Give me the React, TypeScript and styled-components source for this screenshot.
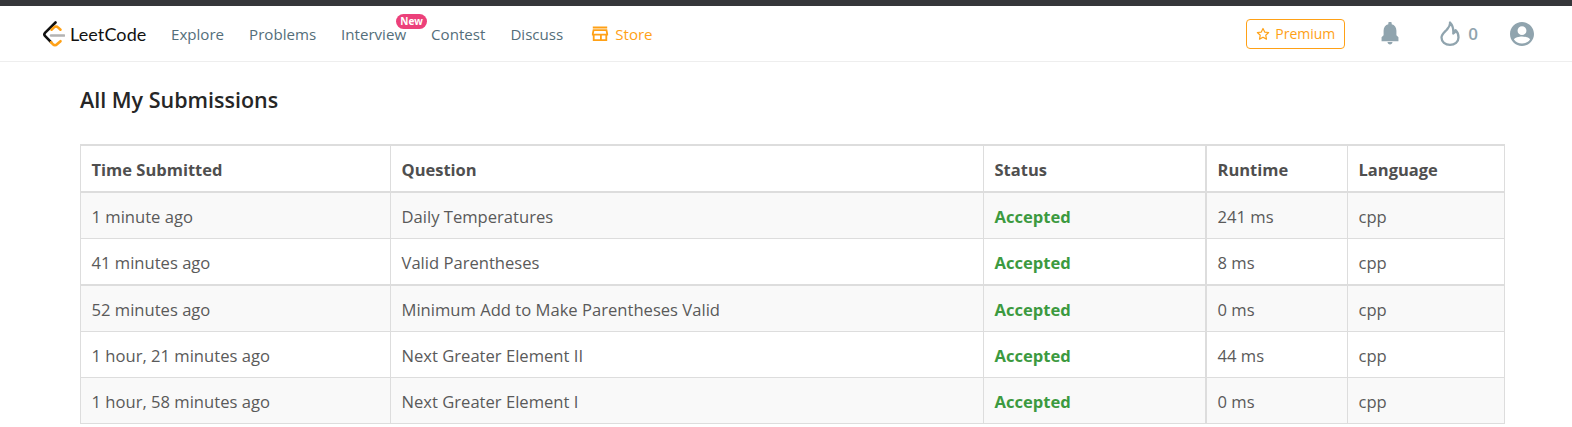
import React from "react";
import styled, { createGlobalStyle } from "styled-components";

const Global = createGlobalStyle`
  html, body { margin: 0; padding: 0; height: 100%; overflow: hidden; background: #fff; }
  body { font-family: "Open Sans", "Noto Sans", "Liberation Sans", sans-serif; }
  * { box-sizing: border-box; }
`;

const TopStrip = styled.div`
  height: 6px;
  background: #35363a;
`;

const NavBar = styled.header`
  height: 56px;
  display: flex;
  align-items: center;
  justify-content: space-between;
  padding: 0 38px 0 43px;
  border-bottom: 1px solid #eeeeee;
`;

const NavLeft = styled.nav`
  display: flex;
  align-items: center;
`;

const Brand = styled.div`
  display: flex;
  align-items: center;
  gap: 5px;
  width: 128px;
`;

const BrandName = styled.span`
  font-family: "Lato", "Liberation Sans", sans-serif;
  font-size: 18px;
  font-weight: 400;
  color: #111;
  letter-spacing: 0.1px;
`;

const NavLink = styled.a<{ $accent?: boolean }>`
  position: relative;
  display: flex;
  align-items: center;
  gap: 6px;
  margin-left: ${(p) => (p.$accent ? 3 : 0)}px;
  margin-right: 25px;
  font-size: 15.1px;
  line-height: 20px;
  color: ${(p) => (p.$accent ? "#ffa116" : "#546e7a")};
`;

const NewBadge = styled.span`
  position: absolute;
  top: -10px;
  right: -21px;
  width: 31px;
  height: 15px;
  border-radius: 8px;
  background: #ec407a;
  color: #fff;
  font-size: 10px;
  font-weight: 700;
  line-height: 15px;
  text-align: center;
`;

const NavRight = styled.div`
  display: flex;
  align-items: center;
`;

const PremiumButton = styled.button`
  width: 99px;
  height: 30px;
  display: flex;
  align-items: center;
  justify-content: center;
  gap: 5px;
  padding: 0;
  margin-right: 36px;
  background: #fff;
  border: 1px solid #ffa116;
  border-radius: 4px;
  color: #ffa116;
  font-family: inherit;
  font-size: 14px;
`;

const StreakGroup = styled.div`
  display: flex;
  align-items: center;
  gap: 8px;
  margin: 0 32px 0 41px;
  color: #90a4ae;
  font-size: 17px;
  font-weight: 600;
`;

const Content = styled.main`
  padding: 0 0 0 80px;
`;

const Title = styled.h1`
  margin: 0;
  padding-top: 24px;
  height: 82px;
  font-size: 21.5px;
  font-weight: 600;
  line-height: 28px;
  color: #262626;
`;

const Table = styled.table`
  width: 1425px;
  table-layout: fixed;
  border-spacing: 0;
  border-top: 2px solid #dddddd;
  border-left: 1px solid #dddddd;
`;

const Row = styled.tr<{ $striped?: boolean }>`
  background: ${(p) => (p.$striped ? "#f9f9f9" : "#fff")};
`;

const HeadCell = styled.th<{ $thick?: boolean }>`
  height: 47px;
  padding: 1px 10.5px 0;
  text-align: left;
  font-size: 16.5px;
  font-weight: 700;
  color: #4f4f4f;
  border-bottom: 2px solid #dddddd;
  border-right: ${(p) => (p.$thick ? 2 : 1)}px solid #dddddd;
`;

const Cell = styled.td<{ $thick?: boolean; $heavy?: boolean }>`
  height: ${(p) => (p.$heavy ? 47 : 46)}px;
  padding: 1px 10.5px 0;
  font-size: 16.6px;
  color: #5a5a5a;
  border-bottom: ${(p) => (p.$heavy ? 2 : 1)}px solid #dddddd;
  border-right: ${(p) => (p.$thick ? 2 : 1)}px solid #dddddd;
`;

const Accepted = styled.strong`
  color: #3c9a40;
  font-weight: 700;
`;

const rows = [
  ["1 minute ago", "Daily Temperatures", "241 ms"],
  ["41 minutes ago", "Valid Parentheses", "8 ms"],
  ["52 minutes ago", "Minimum Add to Make Parentheses Valid", "0 ms"],
  ["1 hour, 21 minutes ago", "Next Greater Element II", "44 ms"],
  ["1 hour, 58 minutes ago", "Next Greater Element I", "0 ms"],
];

const widths = [310, 593, 223, 141, 157];

const Logo = () => (
  <svg width="22" height="26" viewBox="0 0 22 26" fill="none">
    <path d="M8 14.5 H21" stroke="#b3b3b3" strokeWidth="2.6" strokeLinecap="round" />
    <path d="M12.5 1.5 L2.2 11.6 a2.6 2.6 0 0 0 0 3.6 L8 21.2" stroke="#111" strokeWidth="2.6" strokeLinecap="round" strokeLinejoin="round" />
    <path d="M8 21.2 L10 23.3 a2.800 2.800 0 0 0 4 0 L17.500 20.200" stroke="#ffa116" strokeWidth="2.6" strokeLinecap="round" />
    <path d="M8.500 8.700 L11 6.400 a2.800 2.800 0 0 1 4 0 L17.500 8.700" stroke="#ffa116" strokeWidth="2.6" strokeLinecap="round" />
  </svg>
);

const StoreIcon = () => (
  <svg width="18" height="18" viewBox="2 2.5 20 19.5" fill="#ffa116">
    <path d="M20 4H4v2h16V4zm1 10v-2l-1-5H4l-1 5v2h1v6h16v-6h1zm-9 4H6v-4h6v4zm6 0h-4v-4h4v4zM5.040 12l.6-3h12.720l.6 3H5.040z" />
  </svg>
);

const StarIcon = () => (
  <svg width="14" height="14" viewBox="0 0 24 24" fill="none" stroke="#ffa116" strokeWidth="2" strokeLinejoin="round">
    <path d="M12 2.500l2.900 6.200 6.800.8-5 4.600 1.300 6.700-6-3.300-6 3.300 1.300-6.700-5-4.600 6.800-.8z" />
  </svg>
);

const BellIcon = () => (
  <svg width="18" height="23" viewBox="4 2 16 21" fill="#90a4ae" preserveAspectRatio="none">
    <path d="M12 22.500c1.200 0 2.200-1 2.200-2.200H9.800c0 1.200 1 2.200 2.200 2.200zm7.500-5.500v-1l-1.800-2V10c0-3-1.600-5.300-4.200-5.900V3.200a1.500 1.500 0 0 0-3 0v.9C7.900 4.700 6.300 7 6.300 10v4l-1.800 2v3.500h15z" />
  </svg>
);

const FlameIcon = () => (
  <svg width="20" height="25" viewBox="0 0 20 25" fill="none" stroke="#90a4ae" strokeWidth="2.3" strokeLinecap="round" strokeLinejoin="round">
    <path d="M10 1.500c.6 3.300-1.300 5-3.300 7.300C4.300 11.400 1.500 13.300 1.500 16.500c0 4.300 3.700 7.300 8.500 7.300s8.500-3 8.500-7.300c0-3-1.300-5.700-3-7.300-.2 1.700-1 2.800-2.200 3.300.3-4.300-.8-8.500-3.300-11z" />
  </svg>
);

const AccountIcon = () => (
  <svg width="24" height="24" viewBox="2 2 20 20" fill="#90a4ae">
    <path d="M12 2C6.480 2 2 6.480 2 12s4.480 10 10 10 10-4.480 10-10S17.520 2 12 2zm0 3.500a3.700 3.700 0 1 1 0 7.400 3.700 3.700 0 0 1 0-7.400zM12 20c-2.800 0-5.200-1.300-6.700-3.400.2-1.700 4.500-2.600 6.700-2.600s6.500.9 6.700 2.600C17.200 18.700 14.800 20 12 20z" />
  </svg>
);

export default function App() {
  return (
    <>
      <Global />
      <TopStrip />
      <NavBar>
        <NavLeft>
          <Brand>
            <Logo />
            <BrandName>LeetCode</BrandName>
          </Brand>
          <NavLink>Explore</NavLink>
          <NavLink>Problems</NavLink>
          <NavLink>
            Interview
            <NewBadge>New</NewBadge>
          </NavLink>
          <NavLink>Contest</NavLink>
          <NavLink>Discuss</NavLink>
          <NavLink $accent>
            <StoreIcon />
            Store
          </NavLink>
        </NavLeft>
        <NavRight>
          <PremiumButton>
            <StarIcon />
            Premium
          </PremiumButton>
          <BellIcon />
          <StreakGroup>
            <FlameIcon />
            0
          </StreakGroup>
          <AccountIcon />
        </NavRight>
      </NavBar>
      <Content>
        <Title>All My Submissions</Title>
        <Table>
          <colgroup>
            {widths.map((w) => (
              <col key={w} width={w} />
            ))}
          </colgroup>
          <thead>
            <Row>
              <HeadCell>Time Submitted</HeadCell>
              <HeadCell>Question</HeadCell>
              <HeadCell $thick>Status</HeadCell>
              <HeadCell>Runtime</HeadCell>
              <HeadCell>Language</HeadCell>
            </Row>
          </thead>
          <tbody>
            {rows.map(([time, question, runtime], i) => (
              <Row key={time} $striped={i % 2 === 0}>
                <Cell $heavy={i === 1}>{time}</Cell>
                <Cell $heavy={i === 1}>{question}</Cell>
                <Cell $heavy={i === 1} $thick>
                  <Accepted>Accepted</Accepted>
                </Cell>
                <Cell $heavy={i === 1}>{runtime}</Cell>
                <Cell $heavy={i === 1}>cpp</Cell>
              </Row>
            ))}
          </tbody>
        </Table>
      </Content>
    </>
  );
}
